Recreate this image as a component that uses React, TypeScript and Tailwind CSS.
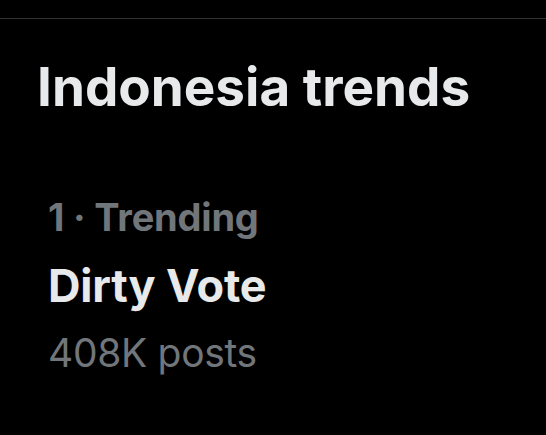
export default function App() {
  return (
    <div className="h-[435px] w-[546px] overflow-hidden bg-black font-['Inter',sans-serif]">
      <div className="h-[18px]" />
      <div className="border-t border-[#2f3336]">
        <h2 className="mt-[38px] pl-[37px] text-[53px] font-bold leading-[60px] text-[#e7e9ea]">
          Indonesia trends
        </h2>
        <div className="mt-[77px] flex flex-col pl-[48px]">
          <div className="text-[38px] font-bold leading-[46px] tracking-[-0.2px] text-[#71767b]">1 · Trending</div>
          <div className="mt-[20px] text-[45px] font-bold leading-[52px] tracking-[-0.2px] text-[#e7e9ea]">Dirty Vote</div>
          <div className="mt-[17px] text-[39px] leading-[48px] tracking-[-0.3px] text-[#71767b]">408K posts</div>
        </div>
      </div>
    </div>
  );
}
